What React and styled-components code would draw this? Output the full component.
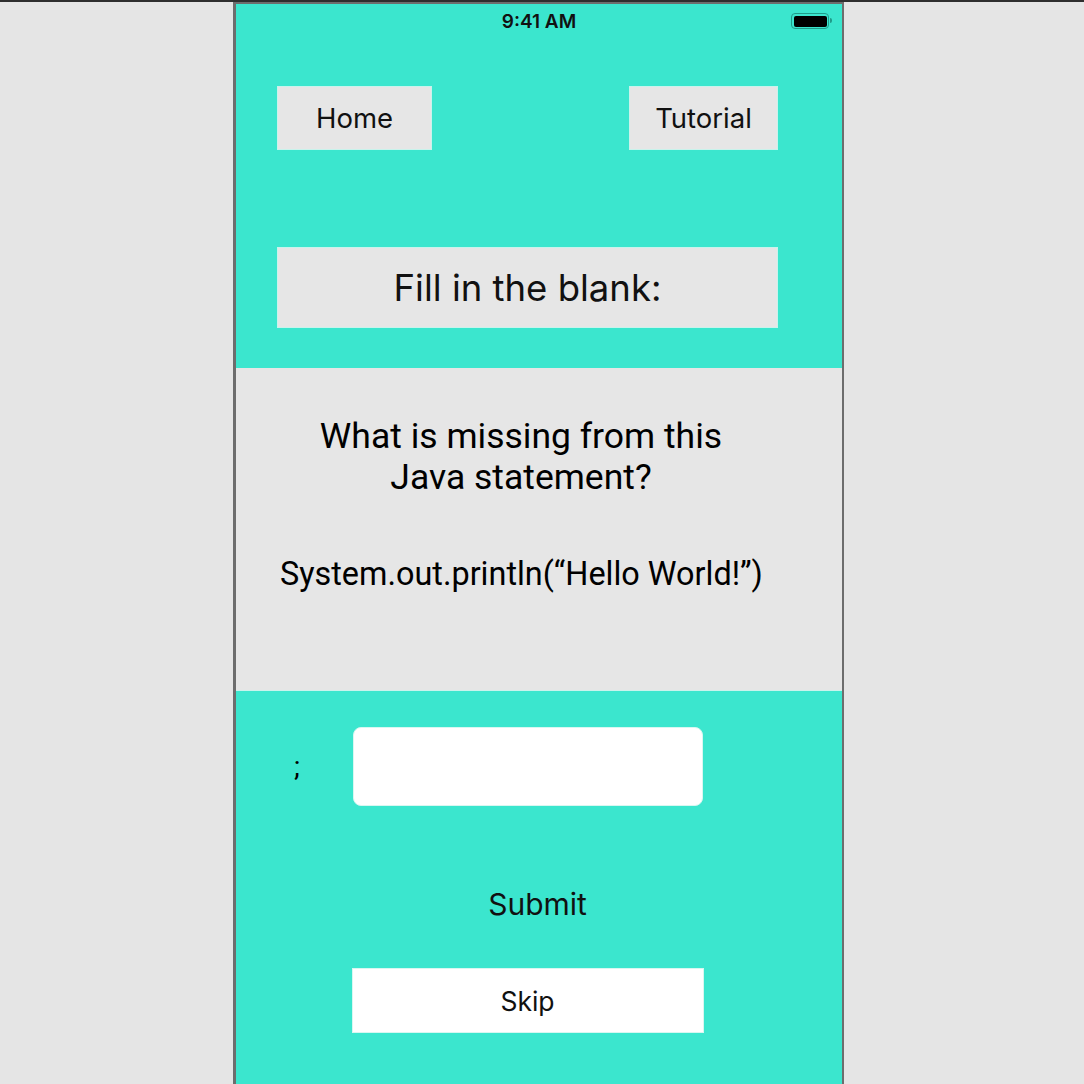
import styled, { createGlobalStyle } from "styled-components";

const GlobalStyle = createGlobalStyle`
  html, body {
    margin: 0;
    padding: 0;
    background: #e5e5e5;
  }
  * { box-sizing: border-box; }
`;

const TEAL = "#3be6ce";
const GREY = "#e6e6e6";

const Page = styled.div`
  height: 1084px;
  overflow: hidden;
  border-top: 2px solid #2e2e2e;
  padding-left: 233px;
`;

const Phone = styled.div`
  width: 611px;
  height: 1082px;
  border: 2px solid #6d6d6d;
  border-bottom: none;
  border-left-width: 3px;
  display: flex;
  flex-direction: column;
  background: ${TEAL};
`;

const StatusBar = styled.div`
  height: 34px;
  display: flex;
  align-items: center;
  justify-content: center;
  position: relative;
  font-family: Inter, "Noto Sans", sans-serif;
  font-weight: 600;
  font-size: 19px;
  color: #111;
`;

const Battery = styled.div`
  position: absolute;
  right: 13px;
  top: 9px;
  width: 38px;
  height: 16px;
  border: 1.5px solid #1f9c8a;
  border-radius: 4px;
  padding: 1.5px;
  &::before {
    content: "";
    display: block;
    width: 100%;
    height: 100%;
    background: #000;
    border-radius: 2px;
  }
  &::after {
    content: "";
    position: absolute;
    right: -4px;
    top: 4px;
    width: 2px;
    height: 5px;
    background: #1f9c8a;
    border-radius: 0 2px 2px 0;
  }
`;

const TopSection = styled.section`
  height: 330px;
  padding: 48px 64px 0 41px;
  display: flex;
  flex-direction: column;
`;

const NavRow = styled.div`
  display: flex;
  justify-content: space-between;
`;

const NavButton = styled.button`
  width: ${({ $w }) => $w}px;
  height: 64px;
  border: 1px solid #c9f3ec;
  background: ${GREY};
  font-family: Inter, "Noto Sans", sans-serif;
  font-size: 27.5px;
  color: #111;
  padding: 0;
`;

const PromptBox = styled.div`
  margin-top: 97px;
  width: 501px;
  height: 81px;
  border: 1px solid #c9f3ec;
  background: ${GREY};
  display: flex;
  align-items: center;
  justify-content: center;
  font-family: Inter, "Noto Sans", sans-serif;
  font-size: 36.5px;
  color: #111;
`;

const QuestionSection = styled.section`
  height: 323px;
  background: ${GREY};
  padding: 48px 80px 0 44px;
  text-align: center;
  font-family: Roboto, "Noto Sans", sans-serif;
  color: #000;
  border-bottom: 1px solid #c9f3ec;
`;

const Question = styled.div`
  font-size: 35.5px;
  line-height: 41px;
  white-space: nowrap;
`;

const Code = styled.div`
  margin-top: 56px;
  font-size: 32.4px;
  line-height: 40px;
  white-space: nowrap;
`;

const AnswerSection = styled.section`
  flex: 1;
  padding: 36px 0 0 0;
  display: flex;
  flex-direction: column;
  align-items: center;
`;

const AnswerRow = styled.div`
  align-self: stretch;
  display: flex;
  align-items: center;
  padding-left: 58px;
`;

const Semicolon = styled.span`
  width: 59px;
  font-family: Roboto, "Noto Sans", sans-serif;
  font-size: 28px;
  color: #000;
`;

const AnswerInput = styled.input`
  width: 350px;
  height: 79px;
  border: 1px solid #d8f7f1;
  border-radius: 8px;
  background: #fff;
  outline: none;
`;

const SubmitButton = styled.button`
  margin-top: 75px;
  margin-left: -3px;
  background: none;
  border: none;
  font-family: Inter, "Noto Sans", sans-serif;
  font-size: 30px;
  color: #111;
  padding: 0;
  height: 46px;
`;

const SkipButton = styled.button`
  margin-top: 41px;
  margin-left: -23px;
  width: 352px;
  height: 65px;
  border: 1px solid #d8f7f1;
  background: #fff;
  font-family: Inter, "Noto Sans", sans-serif;
  font-size: 26.5px;
  color: #111;
  padding: 0;
`;

export default function App() {
  return (
    <>
      <GlobalStyle />
      <Page>
        <Phone>
          <StatusBar>
            9:41 AM
            <Battery />
          </StatusBar>
          <TopSection>
            <NavRow>
              <NavButton $w={155}>Home</NavButton>
              <NavButton $w={149}>Tutorial</NavButton>
            </NavRow>
            <PromptBox>Fill in the blank:</PromptBox>
          </TopSection>
          <QuestionSection>
            <Question>
              What is missing from this
              <br />
              Java statement?
            </Question>
            <Code>System.out.println(“Hello World!”)</Code>
          </QuestionSection>
          <AnswerSection>
            <AnswerRow>
              <Semicolon>;</Semicolon>
              <AnswerInput type="text" />
            </AnswerRow>
            <SubmitButton>Submit</SubmitButton>
            <SkipButton>Skip</SkipButton>
          </AnswerSection>
        </Phone>
      </Page>
    </>
  );
}
